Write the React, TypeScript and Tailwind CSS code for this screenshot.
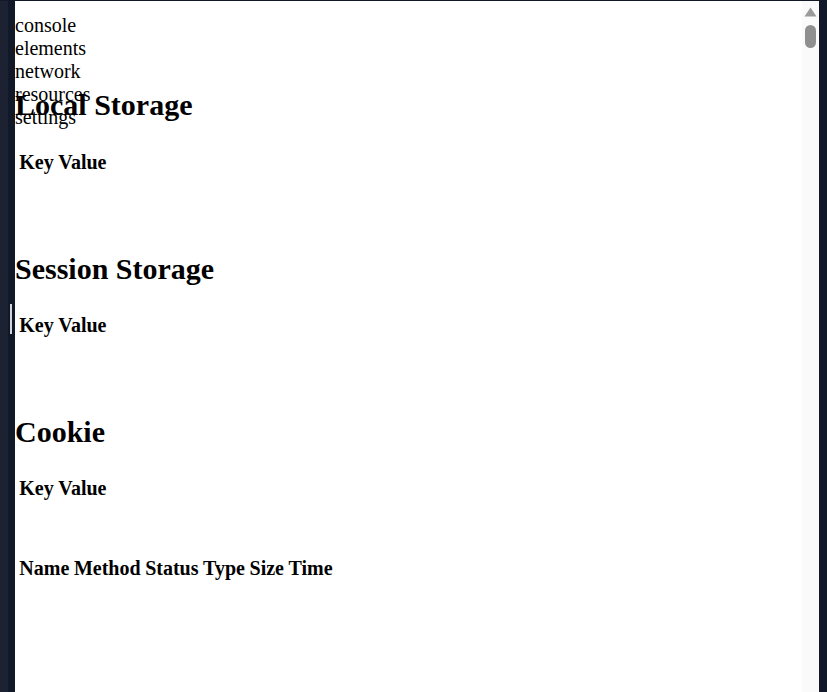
import React from "react";

const navItems = ["console", "elements", "network", "resources", "settings"];

function KeyValueTable({ cols }: { cols: string[] }) {
  return (
    <table className="ml-px border-separate border-spacing-[2px]">
      <thead>
        <tr>
          {cols.map((c) => (
            <th key={c} className="px-[1.3px] py-px text-left font-bold leading-[23px]">
              {c}
            </th>
          ))}
        </tr>
      </thead>
    </table>
  );
}

function Scrollbar() {
  return (
    <div className="flex w-[17px] shrink-0 flex-col items-center bg-[#fafafa]">
      <svg width="13" height="10" viewBox="0 0 13 10" className="mt-[6px]">
        <polygon points="6.5,0.5 12.5,9.5 0.5,9.5" fill="#9a9a9a" />
      </svg>
      <div className="mt-[8px] h-[23px] w-[11px] rounded-full bg-[#8f8f8f]" />
    </div>
  );
}

export default function App() {
  return (
    <div className="flex h-[692px] w-[827px] overflow-hidden bg-[#111827] pt-px">
      {/* left gutter */}
      <div className="relative flex w-[15px] shrink-0">
        <div className="w-[8px] bg-[#1c2232]" />
        <div className="flex-1 bg-[#111827]" />
        <div className="absolute left-[10px] top-[303px] h-[30px] w-[2px] bg-[#d1d5db]" />
      </div>

      {/* panel */}
      <div className="flex flex-1 bg-white">
        <div
          className="relative flex-1 text-[20px] text-black"
          style={{ fontFamily: '"Liberation Serif", "Times New Roman", serif' }}
        >
          <ul className="absolute left-0 top-[13px] leading-[23px]">
            {navItems.map((n) => (
              <li key={n}>{n}</li>
            ))}
          </ul>

          <div className="flex flex-col items-start pt-[87px]">
            <h2 className="mb-[26px] text-[30px] font-bold leading-[34px]">Local Storage</h2>
            <KeyValueTable cols={["Key", "Value"]} />

            <h2 className="mb-[25px] mt-[75px] text-[30px] font-bold leading-[34px]">Session Storage</h2>
            <KeyValueTable cols={["Key", "Value"]} />

            <h2 className="mb-[25px] mt-[75px] text-[30px] font-bold leading-[34px]">Cookie</h2>
            <KeyValueTable cols={["Key", "Value"]} />

            <div className="mt-[51px]">
              <KeyValueTable cols={["Name", "Method", "Status", "Type", "Size", "Time"]} />
            </div>
          </div>
        </div>
        <Scrollbar />
      </div>

      {/* right edge */}
      <div className="w-[8px] shrink-0 bg-[#111827]" />
    </div>
  );
}
